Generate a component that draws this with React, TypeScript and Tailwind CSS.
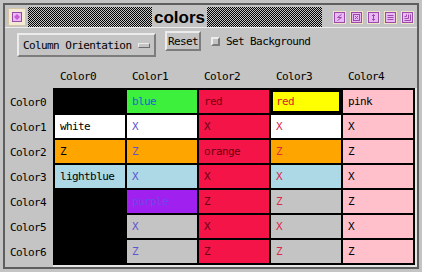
import React from "react";

const mono = "font-['DejaVu_Sans_Mono',monospace] text-[11px] tracking-[-0.6px] leading-none text-black";

type Cell = { bg: string; t: string; c: string; active?: boolean };

const C0 = "text-black";
const C1 = "text-[#5f55d0]";
const C2 = "text-[#6a0012]";
const C3 = "text-[#dc2848]";
const C4 = "text-black";

const rows: Cell[][] = [
  [
    { bg: "bg-black", t: "", c: C0 },
    { bg: "bg-[#3cf03c]", t: "blue", c: "text-[#2a62c8]" },
    { bg: "bg-[#f41448]", t: "red", c: "text-[#7a0010]" },
    { bg: "bg-[#ffff00]", t: "red", c: "text-[#d8202a]", active: true },
    { bg: "bg-[#ffc0cb]", t: "pink", c: C4 },
  ],
  [
    { bg: "bg-white", t: "white", c: C0 },
    { bg: "bg-white", t: "X", c: C1 },
    { bg: "bg-[#f41448]", t: "X", c: C2 },
    { bg: "bg-white", t: "X", c: C3 },
    { bg: "bg-[#ffc0cb]", t: "X", c: C4 },
  ],
  [
    { bg: "bg-[#ffa500]", t: "Z", c: C0 },
    { bg: "bg-[#ffa500]", t: "Z", c: C1 },
    { bg: "bg-[#f41448]", t: "orange", c: C2 },
    { bg: "bg-[#ffa500]", t: "Z", c: C3 },
    { bg: "bg-[#ffc0cb]", t: "Z", c: C4 },
  ],
  [
    { bg: "bg-[#add8e6]", t: "lightblue", c: C0 },
    { bg: "bg-[#add8e6]", t: "X", c: C1 },
    { bg: "bg-[#f41448]", t: "X", c: C2 },
    { bg: "bg-[#add8e6]", t: "X", c: C3 },
    { bg: "bg-[#ffc0cb]", t: "X", c: C4 },
  ],
  [
    { bg: "bg-black", t: "", c: C0 },
    { bg: "bg-[#a020f0]", t: "purple", c: "text-[#6a4ae8]" },
    { bg: "bg-[#f41448]", t: "Z", c: C2 },
    { bg: "bg-[#c4c4c4]", t: "Z", c: C3 },
    { bg: "bg-[#ffc0cb]", t: "Z", c: C4 },
  ],
  [
    { bg: "bg-black", t: "", c: C0 },
    { bg: "bg-[#c4c4c4]", t: "X", c: C1 },
    { bg: "bg-[#f41448]", t: "X", c: C2 },
    { bg: "bg-[#c4c4c4]", t: "X", c: C3 },
    { bg: "bg-[#ffc0cb]", t: "X", c: C4 },
  ],
  [
    { bg: "bg-black", t: "", c: C0 },
    { bg: "bg-[#c4c4c4]", t: "Z", c: C1 },
    { bg: "bg-[#f41448]", t: "Z", c: C2 },
    { bg: "bg-[#c4c4c4]", t: "Z", c: C3 },
    { bg: "bg-[#ffc0cb]", t: "Z", c: C4 },
  ],
];

const P = "#9a4aa8";

function TitleBtn({ kind }: { kind: number }) {
  return (
    <svg width="13" height="13" viewBox="0 0 13 13">
      <rect x="0" y="0" width="13" height="13" fill="#efe4c4" />
      <rect x="1.5" y="1.5" width="10" height="10" fill="#eab8f4" stroke={P} />
      {kind === 0 && <path d="M8.5 3.5 L4.5 6.5 L8.5 6.5 L4.5 9.5" fill="none" stroke={P} />}
      {kind === 1 && (
        <g fill={P}>
          <rect x="3.5" y="3.5" width="6" height="6" fill="none" stroke={P} />
          <rect x="5" y="5" width="1" height="1" />
          <rect x="7" y="5" width="1" height="1" />
          <rect x="6" y="6" width="1" height="1" />
          <rect x="5" y="7" width="1" height="1" />
          <rect x="7" y="7" width="1" height="1" />
        </g>
      )}
      {kind === 2 && (
        <path d="M6.5 3.5 V9.5 M5 5 L6.5 3.5 L8 5 M5 8 L6.5 9.5 L8 8" fill="none" stroke={P} />
      )}
      {kind === 3 && (
        <path d="M3.5 4.5 H9.5 M3.5 6.5 H9.5 M3.5 8.5 H9.5" fill="none" stroke={P} />
      )}
      {kind === 4 && (
        <path d="M3.5 9.5 H9.5 V3.5 M3.5 7.5 H7.5 V3.5 M3.5 5.5 H5.5 V3.5" fill="none" stroke={P} />
      )}
    </svg>
  );
}

const stipple =
  "bg-[repeating-conic-gradient(#000_0%_25%,#c4c4c4_0%_50%)] [background-size:2px_2px]";

const raised = "border-2 border-t-[#ececec] border-l-[#ececec] border-r-[#7c7c7c] border-b-[#7c7c7c]";

export default function App() {
  return (
    <div className="w-[422px] h-[272px] bg-[#c4c4c4] pt-[3px] pl-[3px] overflow-hidden">
      <div className="w-[416px] h-[266px] border-2 border-[#5e5e5e] flex flex-col">
        {/* title bar */}
        <div className="h-[23px] pt-[2px] flex items-stretch pl-[3px] border-b border-[#ececec]">
          <div className="w-[18px] h-[20px] flex items-center">
            <svg width="18" height="18" viewBox="0 0 18 18">
              <rect x="0.5" y="0.5" width="17" height="17" fill="#f3ead6" stroke="#d2c6a4" />
              <rect x="4.5" y="4.5" width="9" height="9" fill="#eab8f4" stroke={P} />
              <path d="M9 6 L12 9 L9 12 L6 9Z" fill="#c85ad8" />
            </svg>
          </div>
          <div className={`ml-[2px] w-[124px] h-[20px] ${stipple}`} />
          <div className="w-[55px] h-[20px] flex items-center justify-center font-['Liberation_Sans',sans-serif] font-bold text-[17px] leading-none text-black">
            colors
          </div>
          <div className={`w-[115px] h-[20px] ${stipple}`} />
          <div className="flex-1 h-[20px] flex items-center pl-[11px] gap-[4px]">
            {[0, 1, 2, 3, 4].map((k) => (
              <TitleBtn key={k} kind={k} />
            ))}
          </div>
        </div>

        {/* controls row */}
        <div className={`h-[36px] flex items-start pl-[12px] ${mono}`}>
          <div className={`mt-[5px] h-[24px] w-[139px] ${raised} flex items-center justify-between pl-[4px] pr-[4px]`}>
            <span>Column Orientation</span>
            <span className={`w-[12px] h-[5px] border border-t-[#ececec] border-l-[#ececec] border-r-[#6c6c6c] border-b-[#6c6c6c]`} />
          </div>
          <div className={`ml-[9px] mt-[3px] h-[20px] w-[36px] ${raised} flex items-center justify-center`}>
            Reset
          </div>
          <div className="ml-[10px] mt-[3px] h-[20px] flex items-center">
            <span className="w-[9px] h-[9px] border-2 border-t-[#ececec] border-l-[#ececec] border-r-[#7c7c7c] border-b-[#7c7c7c]" />
            <span className="ml-[6px]">Set Background</span>
          </div>
        </div>

        {/* header row */}
        <div className={`h-[24px] flex items-center ${mono}`}>
          <div className="w-[48px]" />
          {["Color0", "Color1", "Color2", "Color3", "Color4"].map((h) => (
            <div key={h} className="w-[72px] pl-[7px]">
              {h}
            </div>
          ))}
        </div>

        {/* body */}
        <div className={`flex ${mono}`}>
          <div className="w-[48px] pt-[2px] flex flex-col">
            {rows.map((_, i) => (
              <div key={i} className="h-[25px] flex items-center pl-[5px]">
                {`Color${i}`}
              </div>
            ))}
          </div>
          <div className="border-r-2 border-b-2 border-[#e6e6e6]">
            <div className="bg-black p-[2px] grid grid-cols-[repeat(5,70px)] grid-rows-[repeat(7,23px)] gap-[2px]">
              {rows.flatMap((r, i) =>
                r.map((c, j) => (
                  <div
                    key={`${i}-${j}`}
                    className={`${c.bg} ${c.c} flex items-center whitespace-nowrap overflow-hidden ${
                      c.active ? "border-2 border-black pl-[3px]" : "pl-[5px]"
                    }`}
                  >
                    {c.t}
                  </div>
                ))
              )}
            </div>
          </div>
        </div>
      </div>
    </div>
  );
}
